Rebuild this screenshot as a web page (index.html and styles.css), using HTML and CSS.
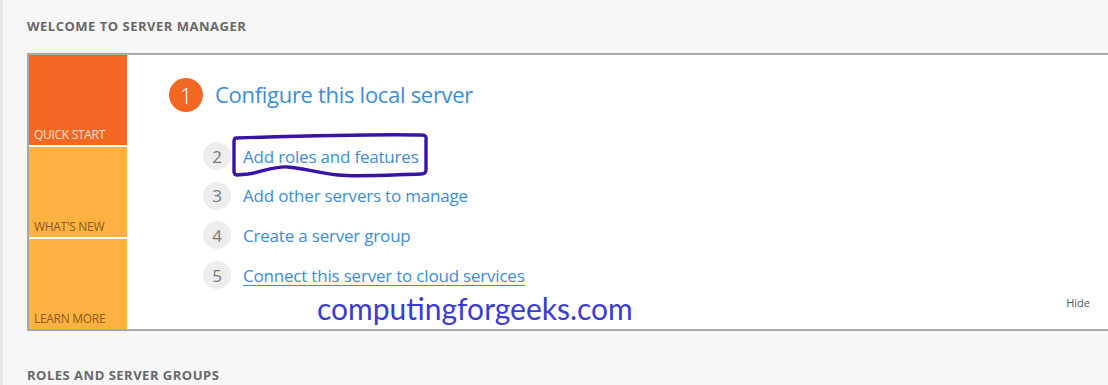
FILE: index.html
```html
<!DOCTYPE html>
<html>
<head>
<meta charset="utf-8">
<link rel="stylesheet" href="styles.css">
</head>
<body>
<div class="page">
  <h2 class="section-title">WELCOME TO SERVER MANAGER</h2>
  <div class="panel">
    <div class="tiles">
      <div class="tile tile-quick">QUICK START</div>
      <div class="tile tile-new">WHAT'S NEW</div>
      <div class="tile tile-learn">LEARN MORE</div>
    </div>
    <div class="content">
      <div class="main-step">
        <span class="badge badge-main">1</span>
        <span class="main-title">Configure this local server</span>
      </div>
      <ul class="steps">
        <li class="step"><span class="badge">2</span><span class="step-text">Add roles and features</span></li>
        <li class="step"><span class="badge">3</span><span class="step-text">Add other servers to manage</span></li>
        <li class="step"><span class="badge">4</span><span class="step-text">Create a server group</span></li>
        <li class="step"><span class="badge">5</span><span class="step-text underline">Connect this server to cloud services</span></li>
      </ul>
      <div class="hide-row"><span class="hide">Hide</span></div>
    </div>
    <svg class="scribble" width="204" height="54" viewBox="0 0 204 54">
      <path d="M8 10 C40 9 150 6 194 7 Q199 7 198 12 L198 42 Q198 46 193 46 C160 47 130 49 110 47 C90 45 75 40 60 39 C45 38 35 44 20 46 L9 47 Q6 47 6 43 L6 14 Q6 10 8 10 Z" fill="none" stroke="#3a12a6" stroke-width="3.4" stroke-linejoin="round" stroke-linecap="round"/>
    </svg>
    <div class="watermark">computingforgeeks.com</div>
  </div>
  <h2 class="section-title section-bottom">ROLES AND SERVER GROUPS</h2>
</div>
</body>
</html>
```
FILE: styles.css
```css
html, body {
  margin: 0;
  padding: 0;
}
body {
  background: #f7f7f7;
  border-left: 3px solid #e8e8e8;
  width: 1105px;
  height: 385px;
  overflow: hidden;
  font-family: "Open Sans", "Noto Sans", sans-serif;
}
.page {
  padding: 18px 0 0 24px;
}
.section-title {
  margin: 0;
  font-size: 13px;
  line-height: 16px;
  font-weight: 700;
  color: #686868;
  letter-spacing: 0.5px;
}
.section-bottom {
  margin-top: 36px;
}
.panel {
  position: relative;
  margin-top: 19px;
  display: flex;
  background: #ffffff;
  border-top: 2px solid #a8a8a8;
  border-left: 2px solid #a8a8a8;
  border-bottom: 2px solid #a8a8a8;
  height: 274px;
}
.tiles {
  display: flex;
  flex-direction: column;
  gap: 2px;
  width: 98px;
}
.tile {
  height: 90px;
  box-sizing: border-box;
  display: flex;
  align-items: flex-end;
  padding: 0 0 3px 5px;
  font-size: 12px;
  line-height: 14px;
  letter-spacing: -0.3px;
}
.tile-quick {
  background: #f26722;
  color: #fde3d2;
}
.tile-new, .tile-learn {
  background: #ffb142;
  color: #8c5a1e;
}
.content {
  flex: 1;
  display: flex;
  flex-direction: column;
  padding: 23px 0 0 42px;
}
.main-step {
  display: flex;
  align-items: center;
  gap: 12px;
}
.badge {
  width: 28px;
  height: 28px;
  border-radius: 50%;
  background: #ededed;
  color: #7a7a7a;
  font-size: 17px;
  display: flex;
  align-items: center;
  justify-content: center;
  flex: none;
}
.badge-main {
  width: 34px;
  height: 34px;
  background: #f26722;
  color: #ffffff;
  font-size: 22px;
  font-weight: 300;
}
.main-title {
  font-size: 22px;
  line-height: 28px;
  margin-bottom: 2px;
  color: #3d8dd4;
  font-weight: 400;
  letter-spacing: -0.3px;
}
.steps {
  list-style: none;
  margin: 30px 0 0 34px;
  padding: 0;
  display: flex;
  flex-direction: column;
  gap: 11.7px;
}
.step {
  display: flex;
  align-items: center;
  gap: 12px;
  height: 28px;
}
.step-text {
  font-size: 17px;
  color: #3d8dd4;
  letter-spacing: -0.2px;
}
.underline {
  text-decoration: underline;
  text-underline-offset: 3px;
}
.hide-row {
  display: flex;
  justify-content: flex-end;
  padding-right: 18px;
  margin-top: 7px;
}
.hide {
  font-size: 11px;
  line-height: 14px;
  color: #555555;
}
.scribble {
  position: absolute;
  left: 199px;
  top: 73px;
}
.watermark {
  position: absolute;
  left: 288px;
  top: 235px;
  font-family: "Lato", "Open Sans", sans-serif;
  font-size: 30px;
  line-height: 36px;
  color: #3b3bd4;
}
```
